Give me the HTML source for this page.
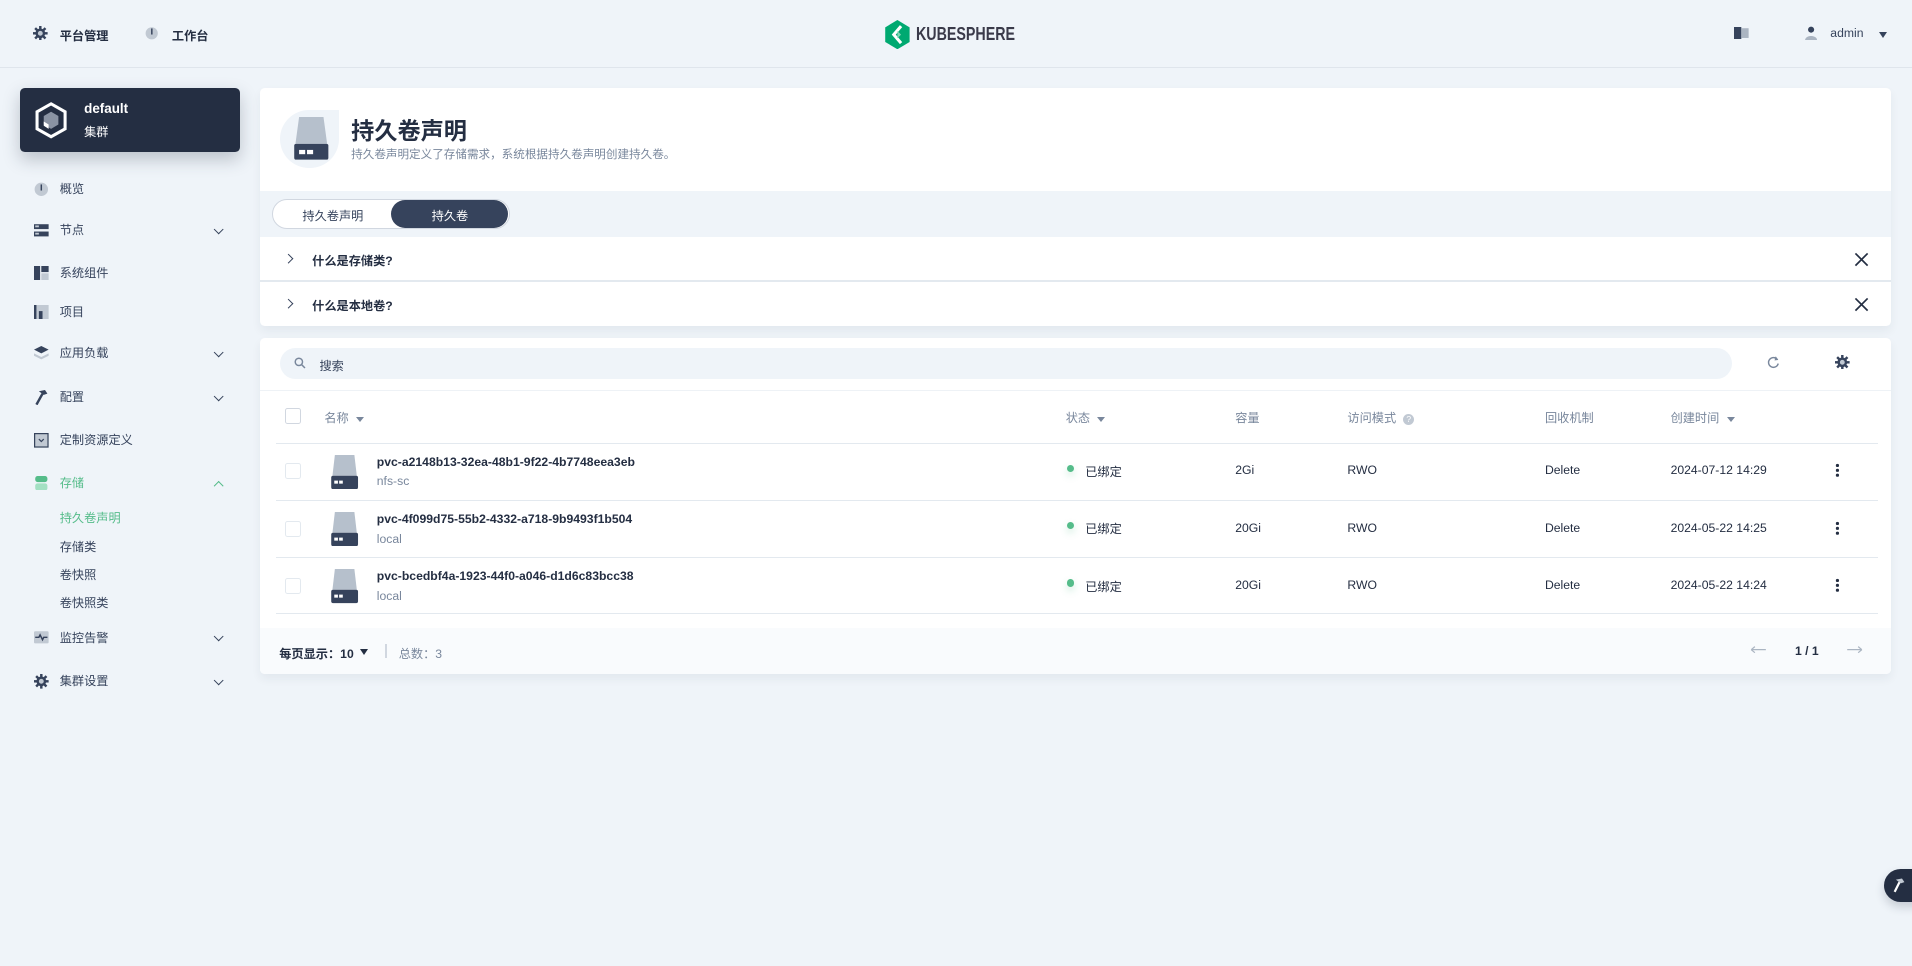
<!DOCTYPE html>
<html><head><meta charset="utf-8">
<style>
*{box-sizing:border-box;margin:0;padding:0}
html{zoom:1.21939}
body{width:1568px;height:792px;background:#eff4f9;font-family:"Liberation Sans","Noto Sans CJK SC",sans-serif;font-size:10px;color:#242e42;position:relative;overflow:hidden}
.a{position:absolute}
.b{font-weight:bold}
.g{color:#79879c}
.nav{position:absolute;left:0;width:200px;height:20px;line-height:20px;font-size:10px;color:#36435c}
.nav .ic{position:absolute;left:28px;top:4px;width:12px;height:12px}
.nav .t{position:absolute;left:49px;top:0}
.nav .ch{position:absolute;left:176px;top:6px;width:6px;height:6px;border-right:1.4px solid #36435c;border-bottom:1.4px solid #36435c;transform:rotate(45deg)}
.sub{position:absolute;left:49px;font-size:10px;color:#36435c}
.card{position:absolute;background:#fff;border-radius:4px;box-shadow:0 4px 8px rgba(36,46,66,.06)}
.th{position:absolute;top:335px;font-size:10px;color:#79879c}
.caret{display:inline-block;width:0;height:0;border-left:3.5px solid transparent;border-right:3.5px solid transparent;border-top:4.5px solid #79879c;vertical-align:middle;margin-left:6px}
.row{position:absolute;left:226px;width:1314px;height:47px;border-top:1px solid #e3e9ef}
.cb{position:absolute;width:13px;height:13px;border:1px solid #d1d7e0;border-radius:2px;background:#fff}
.cell{position:absolute;font-size:10px;color:#242e42}
.x{position:absolute;width:14px;height:14px}
</style></head><body>
<svg width="0" height="0" style="position:absolute"><defs>
<g id="gear"><g fill="#36435c"><rect x="5" y="0" width="2" height="12"/><rect x="0" y="5" width="12" height="2"/><rect x="5" y="0" width="2" height="12" transform="rotate(45 6 6)"/><rect x="5" y="0" width="2" height="12" transform="rotate(-45 6 6)"/></g><circle cx="6" cy="6" r="4" fill="#36435c"/><circle cx="6" cy="6" r="2" fill="#c1c9d3"/></g>
</defs></svg>
<!-- top bar -->
<div class="a" style="left:0;top:55px;width:1568px;height:1px;background:#dfe5ec"></div>
<svg class="a" style="left:27px;top:21px" width="12" height="12" viewBox="0 0 12 12"><use href="#gear"/></svg>
<div class="a b" style="left:49px;top:21px;font-size:10px">平台管理</div>
<svg class="a" style="left:119px;top:21px" width="11" height="12" viewBox="0 0 11 12"><circle cx="5.5" cy="6" r="5" fill="#c1c9d3"/><rect x="5" y="2" width="1.2" height="5" fill="#36435c"/></svg>
<div class="a b" style="left:141px;top:21px;font-size:10px">工作台</div>
<svg class="a" style="left:725px;top:16px" width="22" height="24" viewBox="0 0 22 24"><path d="M11 0L21 6V18L11 24L1 18V6Z" fill="#00a971"/><path d="M14 5L8 12L14 19" fill="none" stroke="#fff" stroke-width="2.5"/><path d="M11 9L14 12L11 15" fill="#7fd4b5"/></svg>
<div class="a b" style="left:751px;top:19px;font-size:15px;color:#3a3a4a;transform:scaleX(0.78);transform-origin:0 0">KUBESPHERE</div>
<svg class="a" style="left:1422px;top:22px" width="12" height="10" viewBox="0 0 12 10"><rect x="0" y="0" width="6" height="10" fill="#36435c"/><rect x="6" y="1" width="6" height="8" fill="#abb5c2"/></svg>
<svg class="a" style="left:1480px;top:21px" width="10" height="12" viewBox="0 0 10 12"><circle cx="5" cy="3" r="2.5" fill="#36435c"/><path d="M0 12C0 7 10 7 10 12Z" fill="#abb5c2"/></svg>
<div class="a" style="left:1501px;top:21px;font-size:10px;color:#36435c">admin</div>
<div class="a" style="left:1541px;top:26px;border-left:4px solid transparent;border-right:4px solid transparent;border-top:5px solid #36435c"></div>

<!-- sidebar card -->
<div class="a" style="left:16px;top:72px;width:181px;height:53px;background:#242e42;border-radius:4px;box-shadow:0 6px 14px rgba(36,46,66,.25)"></div>
<svg class="a" style="left:28px;top:84px" width="28" height="30" viewBox="0 0 28 30"><path d="M14 1.5L25.5 8V22L14 28.5L2.5 22V8Z" fill="none" stroke="#fff" stroke-width="2.5"/><path d="M14 8L20 11.5V18.5L14 22L8 18.5V11.5Z" fill="#8a93a3"/><path d="M8 16L12 18.5V22L8 19.5Z" fill="#fff"/></svg>
<div class="a b" style="left:69px;top:83px;color:#fff;font-size:11px">default</div>
<div class="a" style="left:69px;top:100px;color:#fff;font-size:10px">集群</div>

<!-- nav -->
<div class="nav" style="top:145px"><svg class="ic" viewBox="0 0 12 12"><circle cx="6" cy="6" r="5.5" fill="#c1c9d3"/><rect x="5.4" y="2" width="1.2" height="5" fill="#36435c"/></svg><span class="t">概览</span></div>
<div class="nav" style="top:179px"><svg class="ic" viewBox="0 0 12 12"><rect x="0" y="1" width="12" height="4" fill="#36435c"/><rect x="0" y="7" width="12" height="4" fill="#36435c"/><rect x="1" y="2" width="3" height="1.5" fill="#c1c9d3"/><rect x="1" y="8" width="3" height="1.5" fill="#c1c9d3"/></svg><span class="t">节点</span><i class="ch"></i></div>
<div class="nav" style="top:214px"><svg class="ic" viewBox="0 0 12 12"><rect x="0" y="0" width="5" height="12" fill="#36435c"/><rect x="6" y="0" width="6" height="5" fill="#36435c"/><rect x="6" y="6" width="6" height="6" fill="#c1c9d3"/></svg><span class="t">系统组件</span></div>
<div class="nav" style="top:246px"><svg class="ic" viewBox="0 0 12 12"><rect x="0" y="0" width="12" height="12" fill="#c1c9d3"/><rect x="0" y="0" width="2" height="12" fill="#36435c"/><rect x="4" y="5" width="3" height="7" fill="#36435c"/></svg><span class="t">项目</span></div>
<div class="nav" style="top:280px"><svg class="ic" viewBox="0 0 12 12"><path d="M6 0L12 3L6 6L0 3Z" fill="#36435c"/><path d="M0 6L6 9L12 6V8L6 11L0 8Z" fill="#c1c9d3"/></svg><span class="t">应用负载</span><i class="ch"></i></div>
<div class="nav" style="top:316px"><svg class="ic" viewBox="0 0 12 12"><path d="M2 12L7 3" stroke="#36435c" stroke-width="2"/><path d="M4 1L9 0L11 3L8 4Z" fill="#36435c"/></svg><span class="t">配置</span><i class="ch"></i></div>
<div class="nav" style="top:351px"><svg class="ic" viewBox="0 0 12 12"><rect x="0.5" y="0.5" width="11" height="11" fill="#c1c9d3" stroke="#36435c"/><path d="M4 5L6 7L8 5" fill="none" stroke="#36435c"/></svg><span class="t">定制资源定义</span></div>
<div class="nav" style="top:386px;color:#55bc8a"><svg class="ic" viewBox="0 0 12 12"><rect x="1" y="0" width="10" height="5" rx="2" fill="#55bc8a"/><rect x="1" y="6" width="10" height="6" rx="2" fill="#a3e0c3"/></svg><span class="t">存储</span><i class="ch" style="border-color:#55bc8a;transform:rotate(225deg);top:9px"></i></div>
<div class="sub" style="top:417px;color:#55bc8a">持久卷声明</div>
<div class="sub" style="top:440px">存储类</div>
<div class="sub" style="top:463px">卷快照</div>
<div class="sub" style="top:486px">卷快照类</div>
<div class="nav" style="top:513px"><svg class="ic" viewBox="0 0 12 12"><rect x="0" y="1" width="12" height="10" rx="1" fill="#c1c9d3"/><path d="M1 6H4L5 4L7 8L8 6H11" fill="none" stroke="#36435c" stroke-width="1.2"/></svg><span class="t">监控告警</span><i class="ch"></i></div>
<div class="nav" style="top:549px"><svg class="ic" viewBox="0 0 12 12"><use href="#gear"/></svg><span class="t">集群设置</span><i class="ch"></i></div>

<!-- header card -->
<div class="card" style="left:213px;top:72px;width:1338px;height:195px;overflow:hidden">
  <div class="a" style="left:17px;top:18px;width:48px;height:48px;background:#eff4f9;border-radius:24px 0 24px 24px"></div>
  <svg class="a" style="left:27px;top:24px" width="30" height="36" viewBox="0 0 30 36"><path d="M5 0H25L28 22H2Z" fill="#b6c0cc"/><rect x="1" y="22" width="28" height="13" rx="1.5" fill="#36435c"/><rect x="5" y="27" width="5" height="3.5" fill="#fff"/><rect x="11.5" y="27" width="5" height="3.5" fill="#fff"/></svg>
  <div class="a b" style="left:75px;top:20px;font-size:19px">持久卷声明</div>
  <div class="a g" style="left:75px;top:48px;font-size:9.5px">持久卷声明定义了存储需求，系统根据持久卷声明创建持久卷。</div>
  <div class="a" style="left:0;top:85px;width:1338px;height:37px;background:#eff4f9"></div>
  <div class="a" style="left:10px;top:91px;width:195px;height:25px;border:1px solid #d1d7e0;border-radius:13px;background:#fff"></div>
  <div class="a" style="left:35px;top:97px;font-size:10px;color:#36435c">持久卷声明</div>
  <div class="a" style="left:108px;top:92px;width:96px;height:23px;border-radius:12px;background:#36435c"></div>
  <div class="a" style="left:141px;top:97px;font-size:10px;color:#fff">持久卷</div>
  <div class="a" style="left:0;top:158px;width:1338px;height:1px;background:#e3e9ef"></div>
  <div class="a" style="left:21px;top:137px;width:6px;height:6px;border-right:1.6px solid #36435c;border-bottom:1.6px solid #36435c;transform:rotate(-45deg)"></div>
  <div class="a b" style="left:43px;top:134px;font-size:10px">什么是存储类?</div>
  <div class="a" style="left:21px;top:174px;width:6px;height:6px;border-right:1.6px solid #36435c;border-bottom:1.6px solid #36435c;transform:rotate(-45deg)"></div>
  <div class="a b" style="left:43px;top:171px;font-size:10px">什么是本地卷?</div>
  <svg class="x" style="left:1307px;top:134px" viewBox="0 0 14 14"><path d="M2 2L12 12M12 2L2 12" stroke="#242e42" stroke-width="1.4"/></svg>
  <svg class="x" style="left:1307px;top:171px" viewBox="0 0 14 14"><path d="M2 2L12 12M12 2L2 12" stroke="#242e42" stroke-width="1.4"/></svg>
</div>

<!-- table card -->
<div class="card" style="left:213px;top:277px;width:1338px;height:276px;overflow:hidden">
  <div class="a" style="left:0;top:238px;width:1338px;height:38px;background:#f9fbfd"></div>
</div>
<div class="a" style="left:230px;top:285px;width:1190px;height:26px;background:#eff4f9;border-radius:13px"></div>
<svg class="a" style="left:241px;top:293px" width="10" height="10" viewBox="0 0 10 10"><circle cx="4" cy="4" r="3" fill="none" stroke="#79879c" stroke-width="1.2"/><path d="M6.3 6.3L9 9" stroke="#79879c" stroke-width="1.2"/></svg>
<div class="a" style="left:262px;top:292px;font-size:10px;color:#36435c">搜索</div>
<svg class="a" style="left:1448px;top:291px" width="12" height="12" viewBox="0 0 12 12"><path d="M9.5 4A4 4 0 1 0 10 7" fill="none" stroke="#79879c" stroke-width="1.2"/><path d="M8 1L10 4L7 4.5Z" fill="#79879c"/></svg>
<svg class="a" style="left:1505px;top:291px" width="12" height="12" viewBox="0 0 12 12"><use href="#gear"/></svg>
<div class="a" style="left:213px;top:320px;width:1338px;height:1px;background:#eef2f6"></div>

<div class="cb" style="left:234px;top:335px"></div>
<div class="th" style="left:266px">名称<i class="caret"></i></div>
<div class="th" style="left:874px">状态<i class="caret"></i></div>
<div class="th" style="left:1013px">容量</div>
<div class="th" style="left:1105px">访问模式 <span style="display:inline-block;width:9px;height:9px;border-radius:50%;background:#c1c9d3;color:#fff;font-size:7px;line-height:9px;text-align:center;vertical-align:middle;margin-left:3px">?</span></div>
<div class="th" style="left:1267px">回收机制</div>
<div class="th" style="left:1370px">创建时间<i class="caret"></i></div>

<div class="row" style="top:363px"></div>
<div class="row" style="top:410px"></div>
<div class="row" style="top:457px"></div>
<div class="row" style="top:503px;height:1px"></div>

<div class="cb" style="left:234px;top:380px;border-color:#e3e9ef"></div>
<div class="cb" style="left:234px;top:427px;border-color:#e3e9ef"></div>
<div class="cb" style="left:234px;top:474px;border-color:#e3e9ef"></div>

<svg class="a" style="left:271px;top:373px" width="24" height="28" viewBox="0 0 24 28"><path d="M4 0H20L22 17H2Z" fill="#b6c0cc"/><rect x="1" y="17" width="22" height="11" rx="1.5" fill="#36435c"/><rect x="3.5" y="21" width="3" height="2.5" fill="#fff"/><rect x="7.5" y="21" width="3" height="2.5" fill="#fff"/></svg>
<svg class="a" style="left:271px;top:420px" width="24" height="28" viewBox="0 0 24 28"><path d="M4 0H20L22 17H2Z" fill="#b6c0cc"/><rect x="1" y="17" width="22" height="11" rx="1.5" fill="#36435c"/><rect x="3.5" y="21" width="3" height="2.5" fill="#fff"/><rect x="7.5" y="21" width="3" height="2.5" fill="#fff"/></svg>
<svg class="a" style="left:271px;top:467px" width="24" height="28" viewBox="0 0 24 28"><path d="M4 0H20L22 17H2Z" fill="#b6c0cc"/><rect x="1" y="17" width="22" height="11" rx="1.5" fill="#36435c"/><rect x="3.5" y="21" width="3" height="2.5" fill="#fff"/><rect x="7.5" y="21" width="3" height="2.5" fill="#fff"/></svg>

<div class="cell b" style="left:309px;top:373px">pvc-a2148b13-32ea-48b1-9f22-4b7748eea3eb</div>
<div class="cell" style="left:309px;top:389px;color:#79879c">nfs-sc</div>
<div class="cell b" style="left:309px;top:420px">pvc-4f099d75-55b2-4332-a718-9b9493f1b504</div>
<div class="cell" style="left:309px;top:436px;color:#79879c">local</div>
<div class="cell b" style="left:309px;top:467px">pvc-bcedbf4a-1923-44f0-a046-d1d6c83bcc38</div>
<div class="cell" style="left:309px;top:483px;color:#79879c">local</div>

<div class="a" style="left:875px;top:381px;width:6px;height:6px;border-radius:50%;background:#55bc8a;box-shadow:0 3px 6px rgba(85,188,138,.3)"></div>
<div class="a" style="left:875px;top:428px;width:6px;height:6px;border-radius:50%;background:#55bc8a;box-shadow:0 3px 6px rgba(85,188,138,.3)"></div>
<div class="a" style="left:875px;top:475px;width:6px;height:6px;border-radius:50%;background:#55bc8a;box-shadow:0 3px 6px rgba(85,188,138,.3)"></div>
<div class="cell" style="left:890px;top:379px">已绑定</div>
<div class="cell" style="left:890px;top:426px">已绑定</div>
<div class="cell" style="left:890px;top:473px">已绑定</div>

<div class="cell" style="left:1013px;top:380px">2Gi</div>
<div class="cell" style="left:1013px;top:427px">20Gi</div>
<div class="cell" style="left:1013px;top:474px">20Gi</div>
<div class="cell" style="left:1105px;top:380px">RWO</div>
<div class="cell" style="left:1105px;top:427px">RWO</div>
<div class="cell" style="left:1105px;top:474px">RWO</div>
<div class="cell" style="left:1267px;top:380px">Delete</div>
<div class="cell" style="left:1267px;top:427px">Delete</div>
<div class="cell" style="left:1267px;top:474px">Delete</div>
<div class="cell" style="left:1370px;top:380px">2024-07-12 14:29</div>
<div class="cell" style="left:1370px;top:427px">2024-05-22 14:25</div>
<div class="cell" style="left:1370px;top:474px">2024-05-22 14:24</div>
<svg class="a" style="left:1505px;top:380px" width="4" height="12" viewBox="0 0 4 12"><circle cx="2" cy="2" r="1.3" fill="#242e42"/><circle cx="2" cy="6" r="1.3" fill="#242e42"/><circle cx="2" cy="10" r="1.3" fill="#242e42"/></svg>
<svg class="a" style="left:1505px;top:427px" width="4" height="12" viewBox="0 0 4 12"><circle cx="2" cy="2" r="1.3" fill="#242e42"/><circle cx="2" cy="6" r="1.3" fill="#242e42"/><circle cx="2" cy="10" r="1.3" fill="#242e42"/></svg>
<svg class="a" style="left:1505px;top:474px" width="4" height="12" viewBox="0 0 4 12"><circle cx="2" cy="2" r="1.3" fill="#242e42"/><circle cx="2" cy="6" r="1.3" fill="#242e42"/><circle cx="2" cy="10" r="1.3" fill="#242e42"/></svg>

<!-- footer -->
<div class="a b" style="left:229px;top:528px;font-size:10px">每页显示：10</div>
<div class="a" style="left:295px;top:532px;border-left:4px solid transparent;border-right:4px solid transparent;border-top:5px solid #242e42"></div>
<div class="a" style="left:316px;top:528px;width:1px;height:12px;background:#d1d7e0"></div>
<div class="a g" style="left:327px;top:528px;font-size:10px">总数：3</div>
<svg class="a" style="left:1435px;top:530px" width="14" height="6" viewBox="0 0 14 6"><path d="M1 3H13M1 3L4 0.5M1 3L4 5.5" fill="none" stroke="#abb5c2"/></svg>
<div class="a b" style="left:1472px;top:528px;font-size:10px">1 / 1</div>
<svg class="a" style="left:1514px;top:530px" width="14" height="6" viewBox="0 0 14 6"><path d="M1 3H13M13 3L10 0.5M13 3L10 5.5" fill="none" stroke="#abb5c2"/></svg>

<!-- floating -->
<div class="a" style="left:1545px;top:713px;width:40px;height:27px;border-radius:14px;background:#242e42;box-shadow:0 4px 8px rgba(36,46,66,.2)"></div>
<svg class="a" style="left:1551px;top:718px" width="12" height="14" viewBox="0 0 12 14"><path d="M3 13L7 5" stroke="#fff" stroke-width="1.8"/><path d="M4 3L9 2L11 5L8 6Z" fill="#c1c9d3"/></svg>
</body></html>
